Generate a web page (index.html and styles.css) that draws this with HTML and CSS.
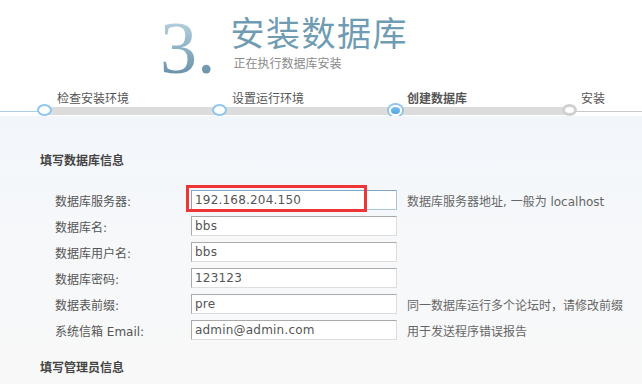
FILE: index.html
```html
<!DOCTYPE html>
<html lang="zh-CN">
<head>
<meta charset="utf-8">
<title>安装数据库</title>
<link rel="stylesheet" href="styles.css">
</head>
<body>
<div class="header">
  <div class="num">3.</div>
  <div class="titles">
    <h1 class="title">安装数据库</h1>
    <p class="sub">正在执行数据库安装</p>
  </div>
</div>
<div class="steps">
  <div class="step"><span class="label">检查安装环境</span><span class="dot"></span></div>
  <div class="step"><span class="label">设置运行环境</span><span class="dot"></span></div>
  <div class="step current"><span class="label">创建数据库</span><span class="dot"></span></div>
  <div class="step todo"><span class="label">安装</span><span class="dot"></span></div>
</div>
<div class="content">
  <h3 class="sec">填写数据库信息</h3>
  <div class="form">
    <div class="row">
      <label class="lbl">数据库服务器:</label>
      <div class="field"><input class="inp focus" type="text" value="192.168.204.150"><span class="mark"></span></div>
      <span class="help">数据库服务器地址, 一般为 localhost</span>
    </div>
    <div class="row">
      <label class="lbl">数据库名:</label>
      <div class="field"><input class="inp" type="text" value="bbs"></div>
    </div>
    <div class="row">
      <label class="lbl">数据库用户名:</label>
      <div class="field"><input class="inp" type="text" value="bbs"></div>
    </div>
    <div class="row">
      <label class="lbl">数据库密码:</label>
      <div class="field"><input class="inp" type="text" value="123123"></div>
    </div>
    <div class="row">
      <label class="lbl">数据表前缀:</label>
      <div class="field"><input class="inp" type="text" value="pre"></div>
      <span class="help">同一数据库运行多个论坛时，请修改前缀</span>
    </div>
    <div class="row">
      <label class="lbl">系统信箱 Email:</label>
      <div class="field"><input class="inp" type="text" value="admin@admin.com"></div>
      <span class="help">用于发送程序错误报告</span>
    </div>
  </div>
  <h3 class="sec sec2">填写管理员信息</h3>
</div>
</body>
</html>
```
FILE: styles.css
```css
html, body {
  margin: 0;
  padding: 0;
}
body {
  width: 642px;
  height: 384px;
  overflow: hidden;
  font-family: "DejaVu Sans", "Noto Sans CJK SC", sans-serif;
  font-size: 12px;
  color: #555;
  background: #f8f8f8;
}

/* header */
.header {
  height: 88px;
  background: #fff;
  display: flex;
  align-items: flex-start;
  padding-left: 160px;
}
.num {
  font-family: "Liberation Serif", serif;
  font-size: 74px;
  line-height: 1;
  margin-top: 11px;
  background: linear-gradient(180deg, #c6dbe6 0%, #93b6c9 45%, #5b869f 100%);
  -webkit-background-clip: text;
  background-clip: text;
  color: transparent;
}
.titles {
  margin-left: 15px;
}
.title {
  margin: 13px 0 0 0;
  font-family: "Noto Sans CJK SC", sans-serif;
  font-weight: 400;
  font-size: 34px;
  line-height: 38px;
  letter-spacing: 1.5px;
  color: #6f9cb2;
}
.sub {
  margin: 5px 0 0 3px;
  font-family: "Noto Sans CJK SC", sans-serif;
  font-size: 12px;
  line-height: 14px;
  color: #8a8a8a;
}

/* steps */
.steps {
  height: 28px;
  display: flex;
  padding-left: 37px;
  overflow: hidden;
  background:
    linear-gradient(#a8cde8, #a8cde8) 0 23px / 40px 1px no-repeat,
    linear-gradient(#c9c9c9, #c9c9c9) 570px 23px / 72px 1px no-repeat,
    linear-gradient(#dcdcdc, #dcdcdc) 44px 19px / 525px 8px no-repeat,
    #fff;
}
.step {
  flex: 0 0 175px;
  display: flex;
  flex-direction: column;
  align-items: flex-start;
  padding-top: 2px;
}
.step.todo {
  flex: 0 0 auto;
}
.label {
  padding-left: 20px;
  line-height: 16px;
  font-family: "Noto Sans CJK SC", sans-serif;
  color: #555;
  white-space: nowrap;
}
.todo .label {
  padding-left: 19px;
}
.dot {
  position: relative;
  z-index: 1;
  width: 11px;
  height: 11px;
  margin-top: -2px;
  border: 2px solid #8dc5ee;
  border-radius: 50%;
  background: #fff;
}
.current .label {
  font-weight: bold;
  color: #555;
}
.current .dot {
  width: 9px;
  height: 9px;
  margin-top: -1px;
  margin-left: 2px;
  border: 2px solid #fff;
  background: linear-gradient(#7cc0f0, #4fa2e4);
  box-shadow: 0 0 0 2px #8dc5ee;
}
.todo .dot {
  width: 9px;
  height: 9px;
  border: 3px solid #d0d0d0;
}

/* content */
.content {
  height: 268px;
  box-sizing: border-box;
  padding: 36px 0 0 40px;
  background: linear-gradient(180deg, #f2f6fb 0%, #f6f8fa 45%, #f8f8f8 100%);
}
.sec {
  margin: 0;
  font-size: 12px;
  line-height: 16px;
  font-weight: bold;
  color: #444;
  font-family: "Noto Sans CJK SC", sans-serif;
}
.sec2 {
  margin-top: 16px;
}
.form {
  margin-top: 19px;
}
.row {
  display: flex;
  align-items: center;
  height: 26px;
}
.lbl {
  flex: 0 0 151px;
  box-sizing: border-box;
  padding-left: 15px;
  color: #555;
  white-space: nowrap;
}
.field {
  flex: 0 0 206px;
  position: relative;
  height: 20px;
}
.inp {
  display: block;
  box-sizing: border-box;
  width: 206px;
  height: 20px;
  margin: 0;
  padding: 0 3px;
  border: 1px solid;
  border-color: #aaaaaa #dddddd #dddddd #aaaaaa;
  background: #fff;
  font-family: "DejaVu Sans", sans-serif;
  font-size: 12px;
  letter-spacing: 0.2px;
  color: #555;
  outline: none;
}
.inp.focus {
  border-color: #7fa7c6 #a9c6dd #a9c6dd #7fa7c6;
}
.mark {
  position: absolute;
  left: -5px;
  top: -5px;
  width: 181px;
  height: 27px;
  box-sizing: border-box;
  border: 3px solid #ef3636;
}
.help {
  margin-left: 10px;
  color: #666;
  white-space: nowrap;
}
```
